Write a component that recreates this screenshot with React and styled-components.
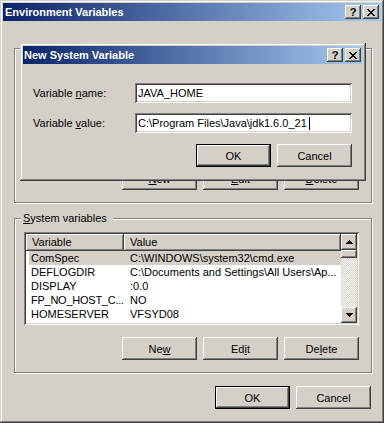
import styled, { createGlobalStyle, css } from "styled-components";

const FACE = "#d4d0c8";

const GlobalStyle = createGlobalStyle`
  html, body {
    margin: 0;
    padding: 0;
    background: ${FACE};
  }
  body {
    font-family: "Liberation Sans", Arial, sans-serif;
    font-size: 11px;
    color: #000;
  }
`;

const raisedEdge = css`
  box-shadow: inset -1px -1px #404040, inset 1px 1px #ffffff,
    inset -2px -2px #808080, inset 2px 2px ${FACE};
`;

const sunkenEdge = css`
  box-shadow: inset 1px 1px #808080, inset -1px -1px #ffffff,
    inset 2px 2px #404040, inset -2px -2px ${FACE};
`;

const Window = styled.div`
  position: relative;
  box-sizing: border-box;
  width: 384px;
  height: 423px;
  padding: 3px;
  background: ${FACE};
  box-shadow: inset -1px -1px #404040, inset 1px 1px ${FACE},
    inset -2px -2px #808080, inset 2px 2px #ffffff;
  display: flex;
  flex-direction: column;
`;

// the child dialog sits on top of the main window
const Dialog = styled(Window)`
  position: absolute;
  left: 20px;
  top: 43px;
  width: 346px;
  height: 138px;
`;

const TitleBar = styled.div`
  flex: none;
  display: flex;
  align-items: center;
  height: 18px;
  padding: 0 2px 0 ${(p) => p.$indent}px;
  background: linear-gradient(to right, #0a246a, #a6caf0);
  color: #fff;
  font-weight: bold;
  font-size: 11px;
`;

const TitleText = styled.span`
  flex: 1;
  white-space: nowrap;
`;

const CaptionButtons = styled.div`
  display: flex;
  gap: 2px;
`;

const CaptionButton = styled.div`
  width: 16px;
  height: 14px;
  box-sizing: border-box;
  background: ${FACE};
  ${raisedEdge};
  display: flex;
  align-items: center;
  justify-content: center;
  color: #000;
  font-weight: bold;
  font-size: 11px;
  line-height: 14px;
`;

const Body = styled.div`
  flex: 1;
  display: flex;
  flex-direction: column;
  padding: 27px 9px 0 11px;
`;

const Group = styled.div`
  position: relative;
  box-sizing: border-box;
  height: 155px;
  border: 1px solid #808080;
  box-shadow: inset 1px 1px #ffffff, 1px 1px #ffffff;
  padding: 13px 12px 12px 9px;
  display: flex;
  flex-direction: column;
  & + & {
    margin-top: 15px;
  }
`;

const GroupLabel = styled.span`
  position: absolute;
  top: -7px;
  left: 6px;
  padding: 0 6px 0 2px;
  background: ${FACE};
  line-height: 13px;
  white-space: nowrap;
`;

const ListView = styled.div`
  box-sizing: border-box;
  height: 93px;
  padding: 2px;
  background: #fff;
  ${sunkenEdge};
  display: flex;
  overflow: hidden;
`;

const ListMain = styled.div`
  flex: 1;
  display: flex;
  flex-direction: column;
  overflow: hidden;
`;

const Header = styled.div`
  flex: none;
  display: flex;
  height: 17px;
`;

const HeaderCell = styled.div`
  box-sizing: border-box;
  width: ${(p) => (p.$w ? `${p.$w}px` : "auto")};
  flex: ${(p) => (p.$w ? "none" : "1")};
  padding-left: 6px;
  line-height: 17px;
  background: ${FACE};
  ${raisedEdge};
`;

const Row = styled.div`
  flex: none;
  display: flex;
  height: 14px;
  line-height: 14px;
  margin-left: 3px;
  white-space: nowrap;
  background: ${(p) => (p.$selected ? FACE : "transparent")};
`;

const NameCell = styled.div`
  box-sizing: border-box;
  width: 95px;
  padding-left: 2px;
  letter-spacing: ${(p) => (p.$tight ? "-0.25px" : "normal")};
  overflow: hidden;
`;

const ValueCell = styled.div`
  padding-left: 6px;
  overflow: hidden;
`;

const ScrollBar = styled.div`
  flex: none;
  width: 16px;
  display: flex;
  flex-direction: column;
  background: repeating-conic-gradient(#ffffff 0% 25%, ${FACE} 0% 50%) 0 0 / 2px 2px;
`;

const ScrollButton = styled.div`
  flex: none;
  box-sizing: border-box;
  height: 16px;
  background: ${FACE};
  ${raisedEdge};
  display: flex;
  align-items: center;
  justify-content: center;
`;

const Thumb = styled.div`
  flex: none;
  height: 8px;
  background: ${FACE};
  ${raisedEdge};
`;

const Track = styled.div`
  flex: 1;
`;

const ButtonRow = styled.div`
  display: flex;
  justify-content: flex-end;
  gap: 6px;
  margin-top: ${(p) => p.$top || 0}px;
  padding-right: ${(p) => p.$right || 0}px;
  ${(p) => p.$push && "margin-top: auto;"}
`;

const PushButton = styled.button`
  box-sizing: border-box;
  width: 75px;
  height: 23px;
  padding: 0;
  margin: 0;
  background: ${FACE};
  border: ${(p) => (p.$default ? "1px solid #000" : "none")};
  ${raisedEdge};
  font-family: inherit;
  font-size: 11px;
  color: #000;
  outline: none;
`;

const DialogBody = styled.div`
  display: flex;
  flex-direction: column;
  padding: 19px 11px 0 10px;
`;

const Field = styled.div`
  display: flex;
  align-items: center;
  height: 20px;
  & + & {
    margin-top: 10px;
  }
`;

const FieldLabel = styled.label`
  flex: none;
  width: 102px;
  white-space: nowrap;
`;

const TextBox = styled.div`
  flex: 1;
  box-sizing: border-box;
  height: 20px;
  padding: 0 3px;
  background: #fff;
  ${sunkenEdge};
  display: flex;
  align-items: center;
  white-space: nowrap;
`;

const Caret = styled.span`
  width: 1px;
  height: 13px;
  margin-left: 2px;
  background: #000;
`;

function CloseGlyph() {
  const px = [
    [0, 0], [1, 0], [6, 0], [7, 0],
    [1, 1], [2, 1], [5, 1], [6, 1],
    [2, 2], [3, 2], [4, 2], [5, 2],
    [3, 3], [4, 3],
    [2, 4], [3, 4], [4, 4], [5, 4],
    [1, 5], [2, 5], [5, 5], [6, 5],
    [0, 6], [1, 6], [6, 6], [7, 6],
  ];
  return (
    <svg width="8" height="7" viewBox="0 0 8 7" shapeRendering="crispEdges">
      {px.map(([x, y]) => (
        <rect key={`${x}-${y}`} x={x} y={y} width="1" height="1" fill="#000" />
      ))}
    </svg>
  );
}

function Arrow({ down }) {
  return (
    <svg width="7" height="4" viewBox="0 0 7 4" shapeRendering="crispEdges">
      <polygon points={down ? "0,0 7,0 3.5,4" : "3.5,0 7,4 0,4"} fill="#000" />
    </svg>
  );
}

function Caption({ title, indent }) {
  return (
    <TitleBar $indent={indent}>
      <TitleText>{title}</TitleText>
      <CaptionButtons>
        <CaptionButton>?</CaptionButton>
        <CaptionButton>
          <CloseGlyph />
        </CaptionButton>
      </CaptionButtons>
    </TitleBar>
  );
}

const userVars = [
  { name: "TEMP", value: "%USERPROFILE%\\Local Settings\\Temp" },
  { name: "TMP", value: "%USERPROFILE%\\Local Settings\\Temp" },
];

const systemVars = [
  { name: "ComSpec", value: "C:\\WINDOWS\\system32\\cmd.exe", selected: true },
  { name: "DEFLOGDIR", value: "C:\\Documents and Settings\\All Users\\Ap..." },
  { name: "DISPLAY", value: ":0.0" },
  { name: "FP_NO_HOST_C...", value: "NO", tight: true },
  { name: "HOMESERVER", value: "VFSYD08" },
  { name: "", value: "\\\\sydfs\\home\\vfsyd08\\users\\dk\\..." },
];

function VarList({ rows }) {
  return (
    <ListView>
      <ListMain>
        <Header>
          <HeaderCell $w={98}>Variable</HeaderCell>
          <HeaderCell>Value</HeaderCell>
        </Header>
        {rows.map((r, i) => (
          <Row key={i} $selected={r.selected}>
            <NameCell $tight={r.tight}>{r.name}</NameCell>
            <ValueCell>{r.value}</ValueCell>
          </Row>
        ))}
      </ListMain>
      <ScrollBar>
        <ScrollButton>
          <Arrow />
        </ScrollButton>
        <Thumb />
        <Track />
        <ScrollButton>
          <Arrow down />
        </ScrollButton>
      </ScrollBar>
    </ListView>
  );
}

export default function App() {
  return (
    <>
      <GlobalStyle />
      <Window>
        <Caption title="Environment Variables" indent={2} />
        <Body>
          <Group>
            <GroupLabel>
              <u>U</u>ser variables for Administrator
            </GroupLabel>
            <VarList rows={userVars} />
            <ButtonRow $push>
              <PushButton><u>N</u>ew</PushButton>
              <PushButton><u>E</u>dit</PushButton>
              <PushButton><u>D</u>elete</PushButton>
            </ButtonRow>
          </Group>
          <Group>
            <GroupLabel>
              <u>S</u>ystem variables
            </GroupLabel>
            <VarList rows={systemVars} />
            <ButtonRow $push>
              <PushButton>Ne<u>w</u></PushButton>
              <PushButton>Ed<u>i</u>t</PushButton>
              <PushButton>De<u>l</u>ete</PushButton>
            </ButtonRow>
          </Group>
          <ButtonRow $top={13} $right={1}>
            <PushButton $default>OK</PushButton>
            <PushButton>Cancel</PushButton>
          </ButtonRow>
        </Body>

        <Dialog>
          <Caption title="New System Variable" indent={1} />
          <DialogBody>
            <Field>
              <FieldLabel>
                Variable <u>n</u>ame:
              </FieldLabel>
              <TextBox>JAVA_HOME</TextBox>
            </Field>
            <Field>
              <FieldLabel>
                Variable <u>v</u>alue:
              </FieldLabel>
              <TextBox>
                C:\Program Files\Java\jdk1.6.0_21
                <Caret />
              </TextBox>
            </Field>
            <ButtonRow $top={11}>
              <PushButton $default>OK</PushButton>
              <PushButton>Cancel</PushButton>
            </ButtonRow>
          </DialogBody>
        </Dialog>
      </Window>
    </>
  );
}
